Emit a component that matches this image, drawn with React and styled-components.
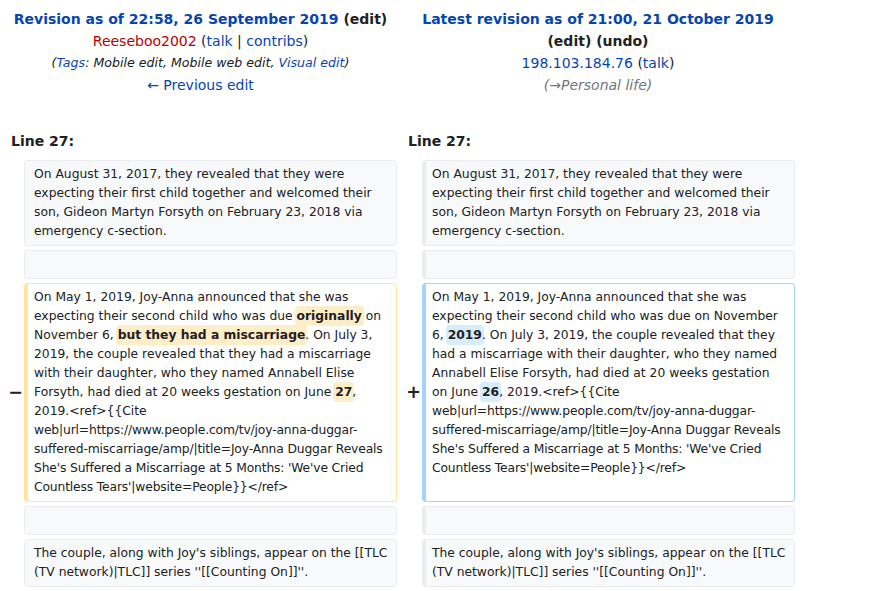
import React from "react";
import styled, { createGlobalStyle, css } from "styled-components";

const Global = createGlobalStyle`
  html, body { margin: 0; padding: 0; background: #fff; }
  body { font-family: "DejaVu Sans", sans-serif; color: #202122; font-size: 14px; }
`;

const DiffGrid = styled.div`
  width: 800px;
  box-sizing: border-box;
  padding: 4px;
  display: grid;
  grid-template-columns: 16px 373px 17px 373px;
  column-gap: 4px;
  row-gap: 4px;
  font-family: "DejaVu Sans", sans-serif;
`;

const TitleCell = styled.div`
  grid-column: span 2;
  text-align: center;
  line-height: 22px;
  padding: 4px 0 2px;
  font-size: 14px;
`;

const TitleLine = styled.div``;

const Link = styled.a`
  color: ${(p) => (p.$red ? "#ba0000" : "#0645ad")};
  text-decoration: none;
  cursor: pointer;
`;

const Strong = styled.strong`
  font-weight: bold;
  color: #202122;
`;

const Italic = styled.div`
  font-style: italic;
  font-size: ${(p) => (p.$muted ? "14px" : "12.6px")};
  color: ${(p) => (p.$muted ? "#72777d" : "#202122")};
`;

const LineNo = styled.div`
  grid-column: span 2;
  font-weight: bold;
  font-size: 14px;
  line-height: 22px;
  padding: 28px 7px 4px;
`;

const Marker = styled.div`
  align-self: center;
  text-align: right;
  font-weight: bold;
  font-size: 17.5px;
  line-height: 1.2;
  margin-right: -3px;
  color: #202122;
`;

const variants = {
  context: css`
    background: #f8f9fa;
    border-color: #eaecf0;
  `,
  deleted: css`
    background: #fff;
    border-color: #ffe49c;
  `,
  added: css`
    background: #fff;
    border-color: #a3d3ff;
  `,
};

const Content = styled.div`
  box-sizing: border-box;
  border-style: solid;
  border-width: 1px 1px 1px ${(p) => (p.$thin ? "1px" : "4px")};
  border-radius: 4px;
  padding: 4px 6px 4px ${(p) => (p.$thin ? "9px" : "6px")};
  font-size: 12.32px;
  line-height: 19px;
  white-space: pre-wrap;
  overflow-wrap: break-word;
  color: #202122;
  min-height: 29px;
  ${(p) => variants[p.$variant || "context"]}
`;

const Markup = styled.span`
  letter-spacing: -0.15px;
`;

const Change = styled.span`
  font-weight: bold;
  border-radius: 4px;
  padding: 3px 2px;
  margin: 0 -2px;
  background: ${(p) => (p.$add ? "#d8ecff" : "#feeec8")};
`;

const Row = ({ left, right, leftMarker, rightMarker, lv, rv }) => (
  <>
    <Marker>{leftMarker}</Marker>
    <Content $variant={lv} $thin={lv === "context"}>{left}</Content>
    <Marker>{rightMarker}</Marker>
    <Content $variant={rv}>{right}</Content>
  </>
);

const p1 =
  "On August 31, 2017, they revealed that they were expecting their first child together and welcomed their son, Gideon Martyn Forsyth on February 23, 2018 via emergency c-section.";
const tail = (
  <>
    , 2019.&lt;ref&gt;{"{{"}Cite{" "}
    <Markup>
      web|url=https://www.people.com/tv/joy-anna-duggar-suffered-miscarriage/amp/|title=Joy-Anna Duggar Reveals She's Suffered a Miscarriage at 5 Months: 'We've Cried Countless Tears'|website=People{"}}"}&lt;/ref&gt;
    </Markup>
  </>
);
const p5 =
  "The couple, along with Joy's siblings, appear on the [[TLC (TV network)|TLC]] series ''[[Counting On]]''.";

export default function App() {
  return (
    <>
      <Global />
      <DiffGrid>
        <TitleCell>
          <TitleLine>
            <Strong>
              <Link>Revision as of 22:58, 26 September 2019</Link> (edit)
            </Strong>
          </TitleLine>
          <TitleLine>
            <Link $red>Reeseboo2002</Link> (<Link>talk</Link> | <Link>contribs</Link>)
          </TitleLine>
          <Italic>
            (<Link>Tags</Link>: Mobile edit, Mobile web edit, <Link>Visual edit</Link>)
          </Italic>
          <TitleLine>
            <Link>← Previous edit</Link>
          </TitleLine>
        </TitleCell>
        <TitleCell>
          <TitleLine>
            <Strong>
              <Link>Latest revision as of 21:00, 21 October 2019</Link> (edit) (undo)
            </Strong>
          </TitleLine>
          <TitleLine>
            <Link>198.103.184.76</Link> (<Link>talk</Link>)
          </TitleLine>
          <Italic $muted>(→Personal life)</Italic>
        </TitleCell>

        <LineNo>Line 27:</LineNo>
        <LineNo>Line 27:</LineNo>

        <Row lv="context" rv="context" left={p1} right={p1} />
        <Row lv="context" rv="context" left="" right="" />
        <Row
          lv="deleted"
          rv="added"
          leftMarker="−"
          rightMarker="+"
          left={
            <>
              On May 1, 2019, Joy-Anna announced that she was expecting their second child who was due <Change>originally</Change> on November 6, <Change>but they had a miscarriage</Change>. On July 3, 2019, the couple revealed that they had a miscarriage with their daughter, who they named Annabell Elise Forsyth, had died at 20 weeks gestation on June <Change>27</Change>
              {tail}
            </>
          }
          right={
            <>
              On May 1, 2019, Joy-Anna announced that she was expecting their second child who was due on November 6, <Change $add>2019</Change>. On July 3, 2019, the couple revealed that they had a miscarriage with their daughter, who they named Annabell Elise Forsyth, had died at 20 weeks gestation on June <Change $add>26</Change>
              {tail}
            </>
          }
        />
        <Row lv="context" rv="context" left="" right="" />
        <Row lv="context" rv="context" left={p5} right={p5} />
      </DiffGrid>
    </>
  );
}
